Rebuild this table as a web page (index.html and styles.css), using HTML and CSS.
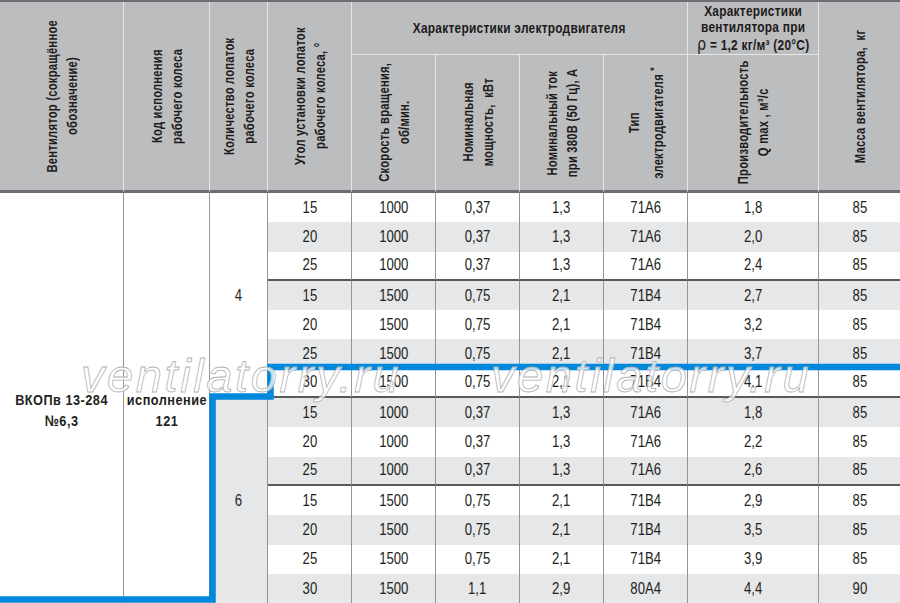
FILE: index.html
```html
<!DOCTYPE html>
<html lang="ru">
<head>
<meta charset="utf-8">
<title>ВКОПв 13-284 №6,3</title>
<link rel="stylesheet" href="styles.css">
</head>
<body>
<div class="wrap">
  <div class="grid">
    <div class="h span2 col1"><div class="vt">Вентилятор (сокращённое<br>обозначение)</div></div>
    <div class="h span2 col2"><div class="vt">Код исполнения<br>рабочего колеса</div></div>
    <div class="h span2 col3"><div class="vt">Количество лопаток<br>рабочего колеса</div></div>
    <div class="h span2 col4"><div class="vt">Угол установки лопаток<br>рабочего колеса, °</div></div>
    <div class="h top motor"><span class="hz">Характеристики электродвигателя</span></div>
    <div class="h top fanchar"><span class="hz">Характеристики<br>вентилятора при<br><span class="rho">ρ</span> = 1,2 кг/м³ (20°C)</span></div>
    <div class="h span2 col10 last"><div class="vt">Масса вентилятора,&nbsp; кг</div></div>
    <div class="h sub col5"><div class="vt">Скорость вращения,<br>об/мин.</div></div>
    <div class="h sub col6"><div class="vt">Номинальная<br>мощность,&nbsp; кВт</div></div>
    <div class="h sub col7"><div class="vt">Номинальный ток<br>при 380В (50 Гц), А</div></div>
    <div class="h sub col8"><div class="vt">Тип<br>электродвигателя <sup>*</sup></div></div>
    <div class="h sub col9"><div class="vt">Производительность<br>Q max , м³/с</div></div>

    <div class="c fan"><span>ВКОПв 13-284<br>№6,3</span></div>
    <div class="c code"><span>исполнение<br>121</span></div>
    <div class="c cnt4"><span>4</span></div>
    <div class="c cnt6"><span>6</span></div>

    <div class="r"><div class="c"><span>15</span></div><div class="c"><span>1000</span></div><div class="c"><span>0,37</span></div><div class="c"><span>1,3</span></div><div class="c"><span>71A6</span></div><div class="c"><span>1,8</span></div><div class="c last"><span>85</span></div></div>
    <div class="r alt"><div class="c"><span>20</span></div><div class="c"><span>1000</span></div><div class="c"><span>0,37</span></div><div class="c"><span>1,3</span></div><div class="c"><span>71A6</span></div><div class="c"><span>2,0</span></div><div class="c last"><span>85</span></div></div>
    <div class="r gb"><div class="c"><span>25</span></div><div class="c"><span>1000</span></div><div class="c"><span>0,37</span></div><div class="c"><span>1,3</span></div><div class="c"><span>71A6</span></div><div class="c"><span>2,4</span></div><div class="c last"><span>85</span></div></div>
    <div class="r alt"><div class="c"><span>15</span></div><div class="c"><span>1500</span></div><div class="c"><span>0,75</span></div><div class="c"><span>2,1</span></div><div class="c"><span>71B4</span></div><div class="c"><span>2,7</span></div><div class="c last"><span>85</span></div></div>
    <div class="r"><div class="c"><span>20</span></div><div class="c"><span>1500</span></div><div class="c"><span>0,75</span></div><div class="c"><span>2,1</span></div><div class="c"><span>71B4</span></div><div class="c"><span>3,2</span></div><div class="c last"><span>85</span></div></div>
    <div class="r alt"><div class="c"><span>25</span></div><div class="c"><span>1500</span></div><div class="c"><span>0,75</span></div><div class="c"><span>2,1</span></div><div class="c"><span>71B4</span></div><div class="c"><span>3,7</span></div><div class="c last"><span>85</span></div></div>
    <div class="r gb"><div class="c"><span>30</span></div><div class="c"><span>1500</span></div><div class="c"><span>0,75</span></div><div class="c"><span>2,1</span></div><div class="c"><span>71B4</span></div><div class="c"><span>4,1</span></div><div class="c last"><span>85</span></div></div>
    <div class="r alt"><div class="c"><span>15</span></div><div class="c"><span>1000</span></div><div class="c"><span>0,37</span></div><div class="c"><span>1,3</span></div><div class="c"><span>71A6</span></div><div class="c"><span>1,8</span></div><div class="c last"><span>85</span></div></div>
    <div class="r"><div class="c"><span>20</span></div><div class="c"><span>1000</span></div><div class="c"><span>0,37</span></div><div class="c"><span>1,3</span></div><div class="c"><span>71A6</span></div><div class="c"><span>2,2</span></div><div class="c last"><span>85</span></div></div>
    <div class="r alt gb"><div class="c"><span>25</span></div><div class="c"><span>1000</span></div><div class="c"><span>0,37</span></div><div class="c"><span>1,3</span></div><div class="c"><span>71A6</span></div><div class="c"><span>2,6</span></div><div class="c last"><span>85</span></div></div>
    <div class="r"><div class="c"><span>15</span></div><div class="c"><span>1500</span></div><div class="c"><span>0,75</span></div><div class="c"><span>2,1</span></div><div class="c"><span>71B4</span></div><div class="c"><span>2,9</span></div><div class="c last"><span>85</span></div></div>
    <div class="r alt"><div class="c"><span>20</span></div><div class="c"><span>1500</span></div><div class="c"><span>0,75</span></div><div class="c"><span>2,1</span></div><div class="c"><span>71B4</span></div><div class="c"><span>3,5</span></div><div class="c last"><span>85</span></div></div>
    <div class="r"><div class="c"><span>25</span></div><div class="c"><span>1500</span></div><div class="c"><span>0,75</span></div><div class="c"><span>2,1</span></div><div class="c"><span>71B4</span></div><div class="c"><span>3,9</span></div><div class="c last"><span>85</span></div></div>
    <div class="r alt"><div class="c"><span>30</span></div><div class="c"><span>1500</span></div><div class="c"><span>1,1</span></div><div class="c"><span>2,9</span></div><div class="c"><span>80A4</span></div><div class="c"><span>4,4</span></div><div class="c last"><span>90</span></div></div>
  </div>

  <svg class="overlay" width="900" height="603" viewBox="0 0 900 603">
    <polyline class="blue" points="900,367 270.5,367 270.5,396.5 212.5,396.5 212.5,599.5 0,599.5"/>
    <text class="wm" x="81" y="392">ventilatorry.ru</text>
    <text class="wm" x="491" y="392">ventilatorry.ru</text>
  </svg>
</div>
</body>
</html>
```

FILE: styles.css
```css
html, body {
  margin: 0;
  padding: 0;
  background: #ffffff;
}

body {
  font-family: "Liberation Sans", Arial, sans-serif;
  color: #231f20;
}

.wrap {
  position: relative;
  width: 900px;
  height: 603px;
  overflow: hidden;
}

.grid {
  display: grid;
  grid-template-columns: 124px 86px 58px 84px 84px 84px 84px 84px 131px 81px;
  grid-template-rows: 53px 138px repeat(14, 29.3px);
  border-top: 2px solid #6d6e71;
}

/* header */
.h {
  box-sizing: border-box;
  background: #bcbdbf;
  border-right: 1px solid #e4e5e6;
  display: flex;
  align-items: center;
  justify-content: center;
  font-weight: bold;
  font-size: 14px;
  letter-spacing: 0.3px;
  text-align: center;
  color: #1e1b1c;
}

.h.last { border-right: none; }

.span2 {
  grid-row: 1 / span 2;
  border-bottom: 3px solid #6d6e71;
}

.top {
  grid-row: 1;
  border-bottom: 1px solid #e4e5e6;
}

.sub {
  grid-row: 2;
  border-bottom: 3px solid #6d6e71;
}

.col1 { grid-column: 1; }
.col2 { grid-column: 2; }
.col3 { grid-column: 3; }
.col4 { grid-column: 4; }
.col5 { grid-column: 5; }
.col6 { grid-column: 6; }
.col7 { grid-column: 7; }
.col8 { grid-column: 8; }
.col9 { grid-column: 9; }
.col10 { grid-column: 10; }

.motor { grid-column: 5 / span 4; }
.fanchar { grid-column: 9; }

.vt {
  writing-mode: vertical-rl;
  transform: rotate(180deg) scaleY(0.8);
  white-space: nowrap;
  text-align: center;
  line-height: 20px;
}

.hz {
  display: inline-block;
  transform: scaleX(0.85);
  line-height: 16.5px;
  white-space: nowrap;
}

.rho {
  font-family: "DejaVu Sans", sans-serif;
  font-weight: normal;
  font-size: 17px;
}

sup {
  font-size: 11px;
  vertical-align: 4px;
}

/* body */
.r { display: contents; }

.c {
  box-sizing: border-box;
  display: flex;
  align-items: center;
  justify-content: center;
  font-size: 16px;
  border-right: 1px solid #939598;
  background: #ffffff;
  white-space: nowrap;
}

.c > span {
  display: inline-block;
  transform: scaleX(0.82);
}

.c.last { border-right: none; }

.r.alt > .c { background: #e6e7e8; }
.r.gb > .c { border-bottom: 2px solid #58595b; }

.fan, .code {
  grid-row: 3 / span 14;
  font-weight: bold;
  font-size: 15.5px;
  line-height: 21px;
  letter-spacing: 0.6px;
  text-align: center;
  padding-top: 24px;
}

.fan { grid-column: 1; }
.code { grid-column: 2; }

.cnt4 {
  grid-column: 3;
  grid-row: 3 / span 7;
}

.cnt6 {
  grid-column: 3;
  grid-row: 10 / span 7;
  background: #e6e7e8;
}

/* overlay */
.overlay {
  position: absolute;
  left: 0;
  top: 0;
  pointer-events: none;
}

.blue {
  fill: none;
  stroke: #0088dc;
  stroke-width: 6.5;
  stroke-linejoin: miter;
}

.wm {
  font-family: "Liberation Sans", sans-serif;
  font-style: italic;
  font-size: 47px;
  letter-spacing: 2.6px;
  fill: rgba(255, 255, 255, 0.75);
  stroke: #b1b3b6;
  stroke-width: 0.8px;
}
```
